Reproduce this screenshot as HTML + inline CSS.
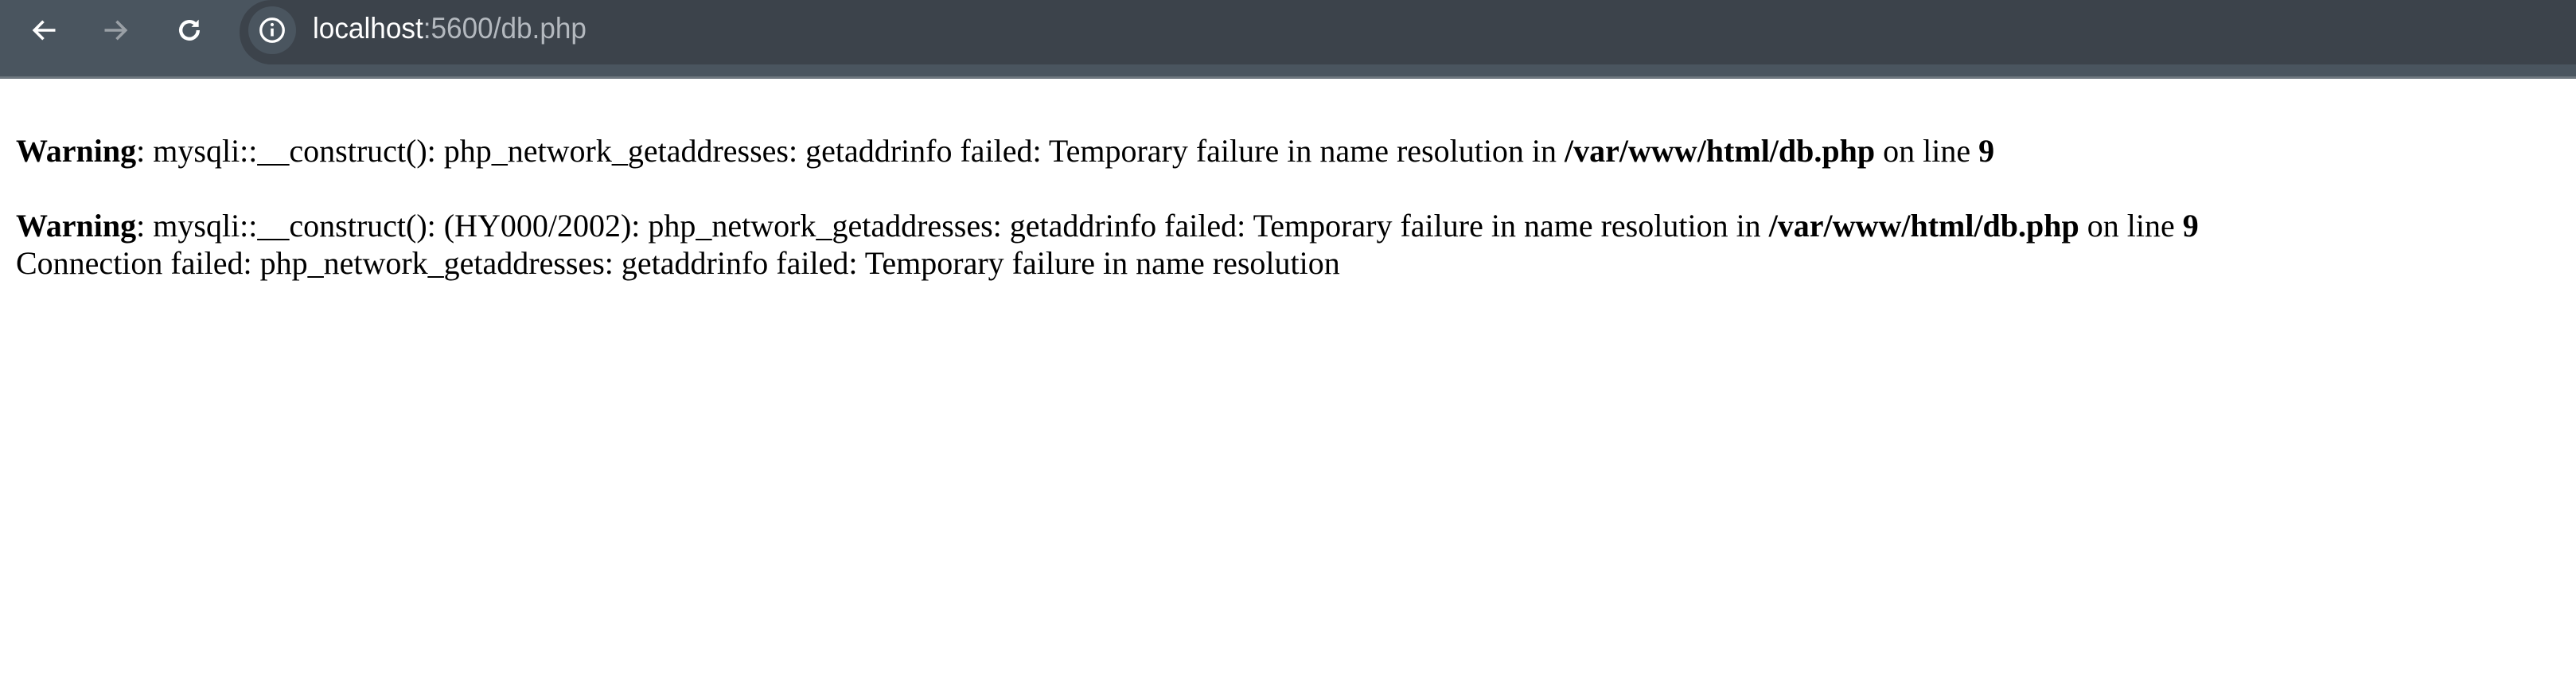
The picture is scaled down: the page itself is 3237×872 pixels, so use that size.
<!DOCTYPE html>
<html><head><style>
html,body{margin:0;padding:0;width:3237px;height:872px;overflow:hidden;background:#fff}
.bar{position:absolute;left:0;top:0;width:3237px;height:96px;background:#4a555f}
.line{position:absolute;left:0;top:96px;width:3237px;height:3px;background:#6f7880}
.pill{position:absolute;left:301px;top:0;width:3100px;height:81px;background:#3c434b;border-radius:0 0 0 40px;border-top-left-radius:40px}
.info{position:absolute;left:312px;top:8px;width:60px;height:60px;border-radius:50%;background:#4a555f}
.url{position:absolute;left:393px;top:15px;font:37px "Liberation Sans",sans-serif;color:#fff;transform:scaleX(0.95);transform-origin:left}
.url span{color:#b4b9bf}
svg{position:absolute}
.content{position:absolute;left:20px;top:166px;font:40px/47px "Liberation Serif",serif;color:#000;white-space:nowrap}
</style></head><body>
<div class="bar"></div><div class="line"></div>
<svg style="left:38px;top:20px" width="36" height="36" viewBox="0 0 24 24"><path d="M21 12H4M11 4.5l-7.5 7.5 7.5 7.5" stroke="#fff" stroke-width="2.4" fill="none"/></svg>
<svg style="left:127px;top:20px" width="36" height="36" viewBox="0 0 24 24"><path d="M3 12h17M13 4.5l7.5 7.5-7.5 7.5" stroke="#9aa0a6" stroke-width="2.4" fill="none"/></svg>
<svg style="left:218px;top:18px" width="40" height="40" viewBox="0 0 24 24"><path d="M18.5 12a6.5 6.5 0 1 1-2-4.7" stroke="#fff" stroke-width="2.6" fill="none"/><path d="M19 4v5.5h-5.5z" fill="#fff"/></svg>
<div class="pill"></div><div class="info"></div>
<svg style="left:324px;top:20px" width="36" height="36" viewBox="0 0 24 24"><circle cx="12" cy="12" r="9.5" stroke="#fff" stroke-width="2.2" fill="none"/><path d="M12 10.5v6.5" stroke="#fff" stroke-width="2.4"/><circle cx="12" cy="7.3" r="1.4" fill="#fff"/></svg>
<div class="url">localhost<span>:5600/db.php</span></div>
<div class="content">
<b>Warning</b>: mysqli::__construct(): php_network_getaddresses: getaddrinfo failed: Temporary failure in name resolution in <b>/var/www/html/db.php</b> on line <b>9</b><br><br>
<b>Warning</b>: mysqli::__construct(): (HY000/2002): php_network_getaddresses: getaddrinfo failed: Temporary failure in name resolution in <b>/var/www/html/db.php</b> on line <b>9</b><br>
Connection failed: php_network_getaddresses: getaddrinfo failed: Temporary failure in name resolution
</div>
</body></html>
